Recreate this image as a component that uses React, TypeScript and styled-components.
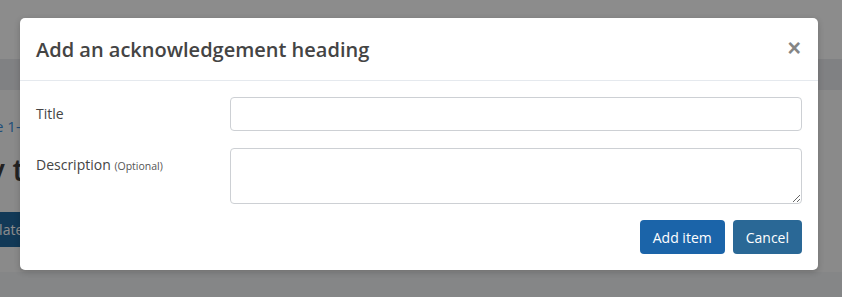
import styled, { createGlobalStyle } from 'styled-components';

const GlobalStyle = createGlobalStyle`
	html, body {
		margin: 0;
		padding: 0;
		width: 842px;
		height: 297px;
		overflow: hidden;
		font-family: "Open Sans", "Liberation Sans", sans-serif;
	}
`

const Page = styled.div`
	position: relative;
	width: 842px;
	height: 297px;
	background: #fbfbfb;
	overflow: hidden;
`

const TopBar = styled.div`
	height: 59px;
	background: #ffffff;
`

const SubNav = styled.div`
	height: 31px;
	background: #e9ebef;
`

const Content = styled.div`
	height: 182px;
	padding-top: 26px;
	box-sizing: border-box;
	display: flex;
	flex-direction: column;
	align-items: flex-start;
`

const Crumb = styled.div`
	margin-left: -35px;
	font-size: 15px;
	line-height: 20px;
	color: #3a8ede;
	white-space: nowrap;
`

const PageHeading = styled.h1`
	margin: 14px 0 0 -72px;
	font-size: 30px;
	font-weight: 600;
	line-height: 40px;
	color: #3e3e3e;
	white-space: nowrap;
`

const PageButton = styled.div`
	margin: 22px 0 0 -50px;
	height: 35px;
	padding: 0 12px;
	display: flex;
	align-items: center;
	background: #21689f;
	color: #ffffff;
	font-size: 14px;
	border-radius: 3px;
`

const Footer = styled.div`
	height: 25px;
	background: #f3f4f6;
`

const Overlay = styled.div`
	position: absolute;
	inset: 0;
	background: rgba(0, 0, 0, 0.45);
`

const Modal = styled.div`
	position: absolute;
	left: 20px;
	top: 18px;
	width: 798px;
	background: #ffffff;
	border-radius: 5px;
	box-shadow: 0 2px 6px rgba(0, 0, 0, 0.2);
`

const ModalHeader = styled.div`
	height: 62px;
	padding: 0 16px;
	display: flex;
	align-items: center;
	justify-content: space-between;
	border-bottom: 1px solid #e5e9ee;
`

const ModalTitle = styled.h2`
	margin: 0;
	font-size: 20px;
	font-weight: 600;
	color: #444444;
`

const Close = styled.button`
	border: 0;
	background: none;
	padding: 0;
	margin-top: -2px;
	margin-right: 1px;
	font-family: "Liberation Sans", sans-serif;
	font-size: 23px;
	font-weight: bold;
	line-height: 1;
	color: #858585;
	cursor: pointer;
`

const ModalBody = styled.div`
	padding: 16px;
	display: flex;
	flex-direction: column;
	gap: 17px;
`

const Row = styled.div`
	display: grid;
	grid-template-columns: 194px 1fr;
	align-items: start;
`

const Label = styled.label`
	padding-top: 7px;
	font-size: 14px;
	line-height: 20px;
	color: #444444;
`

const Hint = styled.span`
	font-size: 10.5px;
	color: #555555;
`

const TextInput = styled.input`
	box-sizing: border-box;
	width: 100%;
	height: 34px;
	border: 1px solid #cdd0d4;
	border-radius: 4px;
	padding: 6px 10px;
	font-family: inherit;
	font-size: 14px;
	background: #ffffff;
`

const TextArea = styled.textarea`
	box-sizing: border-box;
	display: block;
	width: 100%;
	height: 56px;
	border: 1px solid #cdd0d4;
	border-radius: 4px;
	padding: 6px 10px;
	font-family: inherit;
	font-size: 14px;
	resize: vertical;
`

const Actions = styled.div`
	display: flex;
	justify-content: flex-end;
	gap: 8px;
	margin-top: -1px;
`

const Button = styled.button<{ $tone: string }>`
	height: 34px;
	padding: 0 13px;
	border: 0;
	border-radius: 4px;
	background: ${p => p.$tone};
	color: #ffffff;
	font-family: inherit;
	font-size: 14px;
	cursor: pointer;
`

export default function App() {
	return (
		<>
			<GlobalStyle />
			<Page>
				<TopBar />
				<SubNav />
				<Content>
					<Crumb>Stage 1-2 / Acknowledgements</Crumb>
					<PageHeading>Party terms</PageHeading>
					<PageButton>Template</PageButton>
				</Content>
				<Footer />
				<Overlay />
				<Modal>
					<ModalHeader>
						<ModalTitle>Add an acknowledgement heading</ModalTitle>
						<Close aria-label="Close">×</Close>
					</ModalHeader>
					<ModalBody>
						<Row>
							<Label>Title</Label>
							<TextInput type="text" />
						</Row>
						<Row>
							<Label>Description <Hint>(Optional)</Hint></Label>
							<TextArea />
						</Row>
						<Actions>
							<Button $tone="#1b64a9">Add item</Button>
							<Button $tone="#2a6896">Cancel</Button>
						</Actions>
					</ModalBody>
				</Modal>
			</Page>
		</>
	)
}
